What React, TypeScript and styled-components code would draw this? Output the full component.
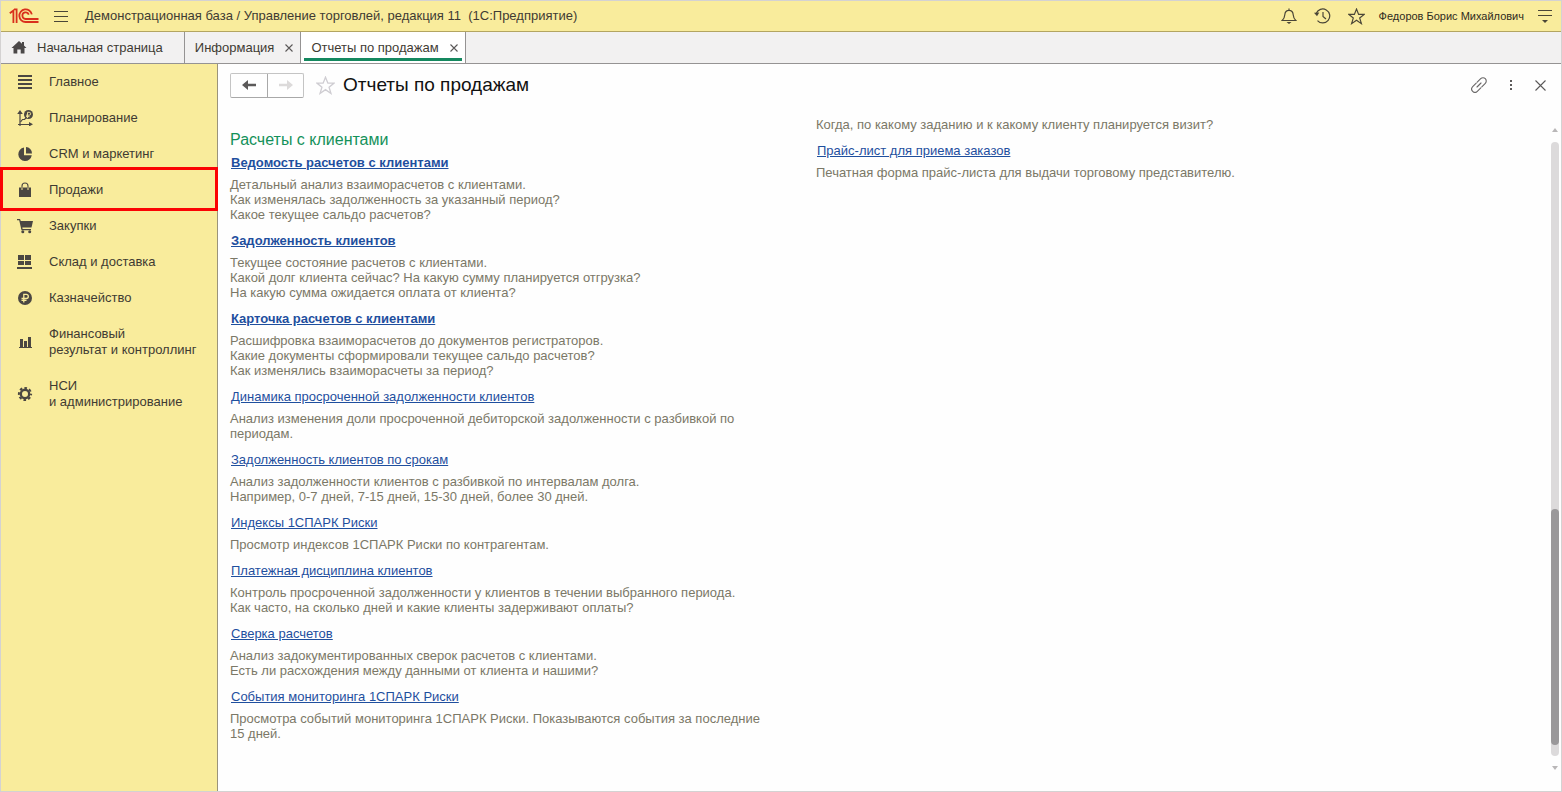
import React from "react";
import styled, { createGlobalStyle } from "styled-components";

const GlobalStyle = createGlobalStyle`
  * { box-sizing: border-box; }
  body {
    margin: 0;
    background: #fefefe;
    color: #3f3b33;
    font: 13px/16px "Liberation Sans", Arial, sans-serif;
  }
  button { font: inherit; color: inherit; border: 0; padding: 0; background: none; cursor: pointer; }
  svg { display: block; flex: none; }
`;

const Shell = styled.div`
  display: flex;
  flex-direction: column;
  min-height: 100vh;
  border: 1px solid #d4d2d2;
`;

const TopBar = styled.header`
  display: flex;
  align-items: center;
  height: 31px;
  padding: 0 9px 0 8px;
  background: #f9ec9c;
  border-bottom: 1px solid #b3a561;
`;

const MenuButton = styled.button`
  margin: 0 17px 0 15px;
`;

const AppTitle = styled.span`
  flex: 1;
  white-space: pre;
`;

const TopActions = styled.div`
  display: flex;
  align-items: center;
  gap: 17px;
`;

const UserName = styled.button`
  margin: 0 -3px;
  font-size: 11px;
  color: #2f2b20;
`;

const TabBar = styled.nav`
  display: flex;
  height: 32px;
  background: #f2f1f1;
  border-bottom: 1px solid #959393;
`;

const Tab = styled.div<{ $active?: boolean }>`
  position: relative;
  display: flex;
  align-items: center;
  justify-content: space-between;
  gap: 11px;
  padding: 0 7px 0 10px;
  border-right: 1px solid #959393;
  background: ${(p) => (p.$active ? "#fff" : "transparent")};
  &::after {
    content: "";
    display: ${(p) => (p.$active ? "block" : "none")};
    position: absolute;
    left: 3px;
    right: 3px;
    bottom: 2px;
    height: 3px;
    background: #15885f;
  }
`;

const HomeTab = styled(Tab)`
  gap: 10px;
  padding-right: 21px;
`;

const TabLabel = styled.button`
  white-space: nowrap;
`;

const Workspace = styled.div`
  flex: 1;
  display: flex;
`;

const Sidebar = styled.nav`
  flex: none;
  width: 217px;
  background: #f9ec9c;
  border-right: 1px solid #9b937a;
`;

const Section = styled.button<{ $marked?: boolean }>`
  position: relative;
  display: flex;
  align-items: center;
  gap: 16px;
  width: 100%;
  min-height: 36px;
  padding: 10px 0 10px 16px;
  text-align: left;
  white-space: pre-line;
  &::after {
    content: "";
    display: ${(p) => (p.$marked ? "block" : "none")};
    position: absolute;
    inset: -5px -1px -3px -1px;
    border: 3px solid #fb0303;
  }
`;

const Page = styled.main`
  flex: 1;
  min-width: 0;
  display: flex;
  flex-direction: column;
`;

const PageHeader = styled.div`
  display: flex;
  align-items: center;
  padding: 8px 15px 8px 12px;
`;

const History = styled.div`
  display: flex;
  border: 1px solid #c4c4c4;
  border-bottom-color: #a8a8a8;
  border-radius: 2px;
`;

const HistoryButton = styled.button`
  display: flex;
  align-items: center;
  justify-content: center;
  width: 36px;
  height: 23px;
  & + & { border-left: 1px solid #a8a8a8; }
`;

const Favorite = styled.button`
  margin: 0 8px 0 12px;
`;

const PageTitle = styled.h1`
  flex: 1;
  margin: 0;
  font-size: 19px;
  line-height: 26px;
  font-weight: 400;
  color: #111;
`;

const PageActions = styled.div`
  display: flex;
  align-items: center;
  gap: 16px;
`;

const PageBody = styled.div`
  flex: 1;
  display: flex;
  padding: 11px 2px 18px 12px;
`;

const Columns = styled.div`
  flex: 1;
  display: grid;
  grid-template-columns: repeat(2, minmax(0, 562px));
  gap: 24px;
  align-items: start;
`;

const Column = styled.section<{ $top?: number }>`
  padding-top: ${(p) => p.$top ?? 0}px;
`;

const GroupTitle = styled.h2`
  margin: 0 0 4px;
  font-size: 16px;
  line-height: 20px;
  font-weight: 400;
  color: #14915a;
`;

const ReportLink = styled.a<{ $strong?: boolean }>`
  display: table;
  margin: 0 0 5px 1px;
  line-height: 18px;
  color: #1f4f9e;
  font-weight: ${(p) => (p.$strong ? 700 : 400)};
  text-underline-offset: 1px;
`;

const Description = styled.p`
  margin: 0 0 10px;
  line-height: 15px;
  color: #7b7867;
  white-space: pre-line;
`;

const ScrollRail = styled.div`
  display: flex;
  flex-direction: column;
  align-items: center;
  gap: 10px;
  width: 8px;
  padding: 11px 0 3px;
`;

const Track = styled.div`
  flex: 1;
  display: flex;
  flex-direction: column;
  width: 8px;
  border-radius: 4px;
  background: #dcdadb;
`;

const Span = styled.div<{ $share: number }>`
  flex: ${(p) => p.$share};
`;

const Thumb = styled(Span)`
  border-radius: 4px;
  background: #9a989a;
`;

const ink = "#4a4637";

const Logo = () => (
  <svg width="30" height="16" viewBox="0 0 30 16" fill="none" stroke="#d9301c" strokeWidth="1.8">
    <path d="M.8 5.2 4.4 2.500v12.500M7.600 15V1.400H5" />
    <path d="M22.8 6.4A6.3 6.3 0 1 0 16.6 14H29.5" />
    <path d="M19.800 6.600A3.300 3.300 0 1 0 16.600 11H29.500" />
  </svg>
);

const Lines = () => (
  <svg width="14" height="13" viewBox="0 0 14 13" stroke={ink} strokeWidth="1">
    <path d="M0 1.5h14M0 6.5h14M0 11.5h14" />
  </svg>
);

const Bell = () => (
  <svg width="16" height="16" viewBox="0 0 16 16" fill="none" stroke={ink} strokeWidth="1.2">
    <path d="M1.2 12.5h13.6c-1.7-1.5-2.4-2.8-2.6-5.7C12 4 10.6 2.300 8 2.300S4 4 3.800 6.800C3.600 9.700 2.900 11 1.200 12.500ZM8 .5v2" />
    <path d="M5.500 14h5L8 16Z" fill={ink} stroke="none" />
  </svg>
);

const Clock = () => (
  <svg width="17" height="16" viewBox="0 0 17 16" fill="none" stroke={ink} strokeWidth="1.2">
    <path d="M2.200 5.500A7 7 0 1 1 3.500 12.600M9 4v4.500l3 2.500" />
    <path d="m0 4.800 5.300-.3-2.300 3.800Z" fill={ink} stroke="none" />
  </svg>
);

const Star = ({ size, color }: { size: number; color: string }) => (
  <svg width={size} height={size} viewBox="0 0 16 16" fill="none" stroke={color} strokeWidth="1.1">
    <path d="m8 1 2 5h5.200L11 9.400l1.600 5.300L8 11.500l-4.600 3.200L5 9.400.8 6H6Z" />
  </svg>
);

const Settings = () => (
  <svg width="14" height="14" viewBox="0 0 14 14" stroke={ink}>
    <path d="M0 1.500h14M0 6.500h14" />
    <path d="M4 11h6l-3 3Z" fill={ink} stroke="none" />
  </svg>
);

const Home = () => (
  <svg width="16" height="13" viewBox="0 0 16 13" fill="#4b4848">
    <path d="M8 0 .5 7h2v5.500H6.300v-4h3.400v4h3.800V7h2l-2.500-2.400V1h-2v1.800Z" />
  </svg>
);

const Cross = ({ size }: { size: number }) => (
  <svg width={size} height={size} viewBox={`0 0 ${size} ${size}`} stroke="#5a5858" strokeWidth="1.1">
    <path d={`M.5.500 ${size - 0.5} ${size - 0.5}M${size - 0.5}.500.5 ${size - 0.5}`} />
  </svg>
);

const Arrow = ({ color, flip }: { color: string; flip?: boolean }) => (
  <svg width="14" height="12" viewBox="0 0 14 12" fill={color}>
    <path d={flip ? "M14 6 8 1v3.800H0v2.400h8V11Z" : "M0 6l6-5v3.800h8v2.400H6V11Z"} />
  </svg>
);

const LinkIcon = () => (
  <svg width="16" height="16" viewBox="0 0 16 16" fill="none" stroke="#696767" strokeWidth="1.100" strokeLinecap="round">
    <path d="m6.200 5.200 3.500-3.500a3.200 3.200 0 0 1 4.600 4.600l-3.500 3.500M9.800 10.800l-3.500 3.500a3.200 3.200 0 0 1-4.600-4.600l3.500-3.500M6 10l4-4" />
  </svg>
);

const Dots = () => (
  <svg width="16" height="12" viewBox="0 0 16 12" fill="#5c5a5a">
    <path d="M7 1h2v2H7zM7 5h2v2H7zM7 9h2v2H7z" />
  </svg>
);

const Triangle = ({ down }: { down?: boolean }) => (
  <svg width="6" height="4" viewBox="0 0 6 4" fill="#b9b7b8">
    <path d={down ? "M0 0h6L3 4Z" : "M0 4h6L3 0Z"} />
  </svg>
);

const sectionShapes: Record<string, React.ReactNode> = {
  main: <path d="M1 1h14v2H1zM1 5h14v2H1zM1 9h14v2H1zM1 13h14v2H1z" />,
  planning: (
    <>
      <path d="M3 0 .2 4H2.400V14H1v1h1.400v1h1.200v-1H12v1.500l4-2.200-4-2.200V14H3.600V4h2.200Z" />
      <path d="m3.500 12 2-2.500h2L9.500 7.500" fill="none" stroke="#4b4742" strokeWidth="1.200" />
      <circle cx="11.500" cy="4.500" r="4.500" />
      <path d="M10.500 8V2.300h1.700a1.300 1.300 0 0 1 0 2.900H9M9 6.600h3.500" fill="none" stroke="#f9ec9c" strokeWidth=".9" />
    </>
  ),
  crm: (
    <>
      <path d="M7 1.500a6.800 6.800 0 1 0 7.800 7.800H7Z" />
      <path d="M9 1v6.500h6A6.500 6.500 0 0 0 9 1Z" />
    </>
  ),
  sales: (
    <>
      <path d="M2 5.500h12V15H2Z" />
      <path d="M5 8V4a3 3 0 0 1 6 0v4" fill="none" stroke="#4b4742" strokeWidth="1.100" />
      <path d="M5 8V5.500M11 8V5.500" stroke="#f9ec9c" strokeWidth="1" />
    </>
  ),
  purchases: (
    <>
      <path d="M0 1h3l.8 2H16l-1.500 6.500H5.300l.3 1.500H14v1.200H4.500L2.200 2.300H0Z" />
      <circle cx="5.800" cy="13.800" r="1.500" />
      <circle cx="12.700" cy="13.800" r="1.500" />
    </>
  ),
  warehouse: <path d="M1 1h6v5H1zM8 1h6v5H8zM1 7h6v4H1zM8 7h6v4H8zM0 13h15v2H0z" />,
  treasury: (
    <>
      <circle cx="8" cy="8" r="7" />
      <path d="M6.800 12.500V4.300h2.400a2.100 2.100 0 0 1 0 4.200H4.500M4.500 10.400h5" fill="none" stroke="#f9ec9c" strokeWidth="1.300" />
    </>
  ),
  finance: <path d="M3 5h3v8H3zM7 7h3v6H7zM11 3h3v10h-3zM2 13h13v1H2z" />,
  admin: (
    <>
      <circle cx="8" cy="8" r="4.200" fill="none" stroke="#4b4742" strokeWidth="2.400" />
      <circle cx="8" cy="8" r="6.100" fill="none" stroke="#4b4742" strokeWidth="2" strokeDasharray="2.600 2.190" strokeDashoffset="1.300" />
    </>
  ),
};

const sections = [
  { icon: "main", label: "Главное" },
  { icon: "planning", label: "Планирование" },
  { icon: "crm", label: "CRM и маркетинг" },
  { icon: "sales", label: "Продажи", marked: true },
  { icon: "purchases", label: "Закупки" },
  { icon: "warehouse", label: "Склад и доставка" },
  { icon: "treasury", label: "Казначейство" },
  { icon: "finance", label: "Финансовый\nрезультат и контроллинг" },
  { icon: "admin", label: "НСИ\nи администрирование" },
];

const reports = [
  {
    title: "Ведомость расчетов с клиентами",
    strong: true,
    text: "Детальный анализ взаиморасчетов с клиентами.\nКак изменялась задолженность за указанный период?\nКакое текущее сальдо расчетов?",
  },
  {
    title: "Задолженность клиентов",
    strong: true,
    text: "Текущее состояние расчетов с клиентами.\nКакой долг клиента сейчас? На какую сумму планируется отгрузка?\nНа какую сумма ожидается оплата от клиента?",
  },
  {
    title: "Карточка расчетов с клиентами",
    strong: true,
    text: "Расшифровка взаиморасчетов до документов регистраторов.\nКакие документы сформировали текущее сальдо расчетов?\nКак изменялись взаиморасчеты за период?",
  },
  {
    title: "Динамика просроченной задолженности клиентов",
    text: "Анализ изменения доли просроченной дебиторской задолженности с разбивкой по\nпериодам.",
  },
  {
    title: "Задолженность клиентов по срокам",
    text: "Анализ задолженности клиентов с разбивкой по интервалам долга.\nНапример, 0-7 дней, 7-15 дней, 15-30 дней, более 30 дней.",
  },
  { title: "Индексы 1СПАРК Риски", text: "Просмотр индексов 1СПАРК Риски по контрагентам." },
  {
    title: "Платежная дисциплина клиентов",
    text: "Контроль просроченной задолженности у клиентов в течении выбранного периода.\nКак часто, на сколько дней и какие клиенты задерживают оплаты?",
  },
  {
    title: "Сверка расчетов",
    text: "Анализ задокументированных сверок расчетов с клиентами.\nЕсть ли расхождения между данными от клиента и нашими?",
  },
  {
    title: "События мониторинга 1СПАРК Риски",
    text: "Просмотра событий мониторинга 1СПАРК Риски. Показываются события за последние\n15 дней.",
  },
];

export default function App() {
  return (
    <>
      <GlobalStyle />
      <Shell>
        <TopBar>
          <Logo />
          <MenuButton aria-label="Меню"><Lines /></MenuButton>
          <AppTitle>{"Демонстрационная база / Управление торговлей, редакция 11  (1С:Предприятие)"}</AppTitle>
          <TopActions>
            <button aria-label="Уведомления"><Bell /></button>
            <button aria-label="История"><Clock /></button>
            <button aria-label="Избранное"><Star size={17} color={ink} /></button>
            <UserName>Федоров Борис Михайлович</UserName>
            <button aria-label="Настройки"><Settings /></button>
          </TopActions>
        </TopBar>
        <TabBar>
          <HomeTab>
            <Home />
            <TabLabel>Начальная страница</TabLabel>
          </HomeTab>
          <Tab>
            <TabLabel>Информация</TabLabel>
            <button aria-label="Закрыть"><Cross size={8} /></button>
          </Tab>
          <Tab $active>
            <TabLabel>Отчеты по продажам</TabLabel>
            <button aria-label="Закрыть"><Cross size={8} /></button>
          </Tab>
        </TabBar>
        <Workspace>
          <Sidebar>
            {sections.map((s) => (
              <Section key={s.icon} $marked={s.marked}>
                <svg width="16" height="16" viewBox="0 0 16 16" fill="#4b4742">{sectionShapes[s.icon]}</svg>
                <span>{s.label}</span>
              </Section>
            ))}
          </Sidebar>
          <Page>
            <PageHeader>
              <History>
                <HistoryButton aria-label="Назад"><Arrow color="#5b5959" /></HistoryButton>
                <HistoryButton aria-label="Вперед" disabled><Arrow color="#dcdada" flip /></HistoryButton>
              </History>
              <Favorite aria-label="В избранное"><Star size={19} color="#cfcdd2" /></Favorite>
              <PageTitle>Отчеты по продажам</PageTitle>
              <PageActions>
                <button aria-label="Получить ссылку"><LinkIcon /></button>
                <button aria-label="Еще"><Dots /></button>
                <button aria-label="Закрыть"><Cross size={11} /></button>
              </PageActions>
            </PageHeader>
            <PageBody>
              <Columns>
                <Column $top={13}>
                  <GroupTitle>Расчеты с клиентами</GroupTitle>
                  {reports.map((r) => (
                    <React.Fragment key={r.title}>
                      <ReportLink href="#" $strong={r.strong}>{r.title}</ReportLink>
                      <Description>{r.text}</Description>
                    </React.Fragment>
                  ))}
                </Column>
                <Column>
                  <Description>Когда, по какому заданию и к какому клиенту планируется визит?</Description>
                  <ReportLink href="#">Прайс-лист для приема заказов</ReportLink>
                  <Description>Печатная форма прайс-листа для выдачи торговому представителю.</Description>
                </Column>
              </Columns>
              <ScrollRail>
                <Triangle />
                <Track>
                  <Span $share={367} />
                  <Thumb $share={236} />
                  <Span $share={11} />
                </Track>
                <Triangle down />
              </ScrollRail>
            </PageBody>
          </Page>
        </Workspace>
      </Shell>
    </>
  );
}
